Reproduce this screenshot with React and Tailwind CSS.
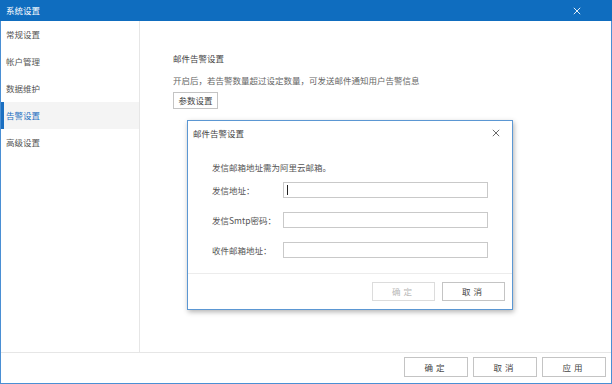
import React from "react";

// --- Sidebar entries ---
const MENU = ["常规设置", "帐户管理", "数据维护", "告警设置", "高级设置"];
const ACTIVE = "告警设置";

const CloseIcon = ({ size = 9, className = "" }) => (
  <svg
    width={size}
    height={size}
    viewBox="0 0 10 10"
    className={className}
    fill="none"
    stroke="currentColor"
    strokeWidth="1.1"
  >
    <path d="M1 1 L9 9 M9 1 L1 9" />
  </svg>
);

const Button = ({ children, disabled, className = "" }) => (
  <button
    className={`flex items-center justify-center border bg-white text-[8.5px] tracking-[3px] ${
      disabled
        ? "border-[#dcdcdc] text-[#b8b8b8]"
        : "border-[#c4c4c4] text-[#444]"
    } ${className}`}
  >
    {children}
  </button>
);

const Field = ({ label, caret }) => (
  <div className="flex items-center h-[16px]">
    <span className="w-[71px] text-[8.5px] text-[#555]">{label}</span>
    <div className="relative w-[205px] h-[16px] border border-[#c9c9c9] bg-white">
      {caret && (
        <span className="absolute left-[3px] top-[2px] w-px h-[10px] bg-[#222]" />
      )}
    </div>
  </div>
);

const MailDialog = () => (
  <div className="absolute left-[187px] top-[120px] w-[326px] h-[190px] bg-white border border-[#5b97d3] shadow-[1px_2px_5px_rgba(0,0,0,0.3)] flex flex-col">
    <div className="h-[24px] flex items-center justify-between pl-[5px] pr-[12px] text-[8.5px] text-[#444]">
      <span>邮件告警设置</span>
      <CloseIcon size={8} className="text-[#555]" />
    </div>
    <div className="flex-1 pl-[24px] pt-[16px]">
      <div className="text-[8.5px] text-[#555] leading-[12px] mb-[9px]">
        发信邮箱地址需为阿里云邮箱。
      </div>
      <div className="flex flex-col gap-[14px]">
        <Field label="发信地址：" caret />
        <Field label="发信Smtp密码：" />
        <Field label="收件邮箱地址：" />
      </div>
    </div>
    <div className="h-[36px] border-t border-[#ececec] flex items-center justify-end gap-[7px] pr-[7px] pb-[1px]">
      <Button disabled className="w-[63px] h-[19px]">确定</Button>
      <Button className="w-[63px] h-[19px]">取消</Button>
    </div>
  </div>
);

const App = () => {
  return (
    <div
      className="relative w-[612px] h-[384px] bg-white flex flex-col overflow-hidden"
      style={{ fontFamily: '"Noto Sans CJK SC", "Noto Sans", sans-serif' }}
    >
      {/* Title bar */}
      <div className="h-[21px] bg-[#0f6dbf] flex items-center justify-between pl-[6px] pr-[31px] text-white text-[8.5px]">
        <span>系统设置</span>
        <CloseIcon size={8} />
      </div>

      {/* Body */}
      <div className="flex-1 flex flex-col border-x border-b border-[#4a8fd4]">
        <div className="flex-1 flex">
          <div className="w-[139px] border-r border-[#e6e6e6] flex flex-col">
            {MENU.map((item) => (
              <div
                key={item}
                className={`h-[27px] flex items-center text-[8.5px] ${
                  item === ACTIVE
                    ? "bg-[#f4f4f4] text-[#1b6fc1] border-l-[3px] border-[#1b6fc1] pl-[2px]"
                    : "text-[#555] pl-[5px]"
                }`}
              >
                {item}
              </div>
            ))}
          </div>
          <div className="flex-1 pl-[33px] pt-[31px]">
            <div className="text-[8.5px] text-[#444] leading-[12px]">邮件告警设置</div>
            <div className="text-[8.5px] text-[#666] leading-[12px] mt-[10px]">
              开启后，若告警数量超过设定数量，可发送邮件通知用户告警信息
            </div>
            <button className="mt-[6px] w-[45px] h-[17px] border border-[#c4c4c4] bg-white text-[8.5px] text-[#444] flex items-center justify-center">
              参数设置
            </button>
          </div>
        </div>

        {/* Footer */}
        <div className="h-[31px] border-t border-[#e6e6e6] flex items-center justify-end gap-[5px] pr-[5px] pb-[2px]">
          <Button className="w-[64px] h-[20px]">确定</Button>
          <Button className="w-[64px] h-[20px]">取消</Button>
          <Button className="w-[64px] h-[20px]">应用</Button>
        </div>
      </div>

      <MailDialog />
    </div>
  );
};

export default App;
